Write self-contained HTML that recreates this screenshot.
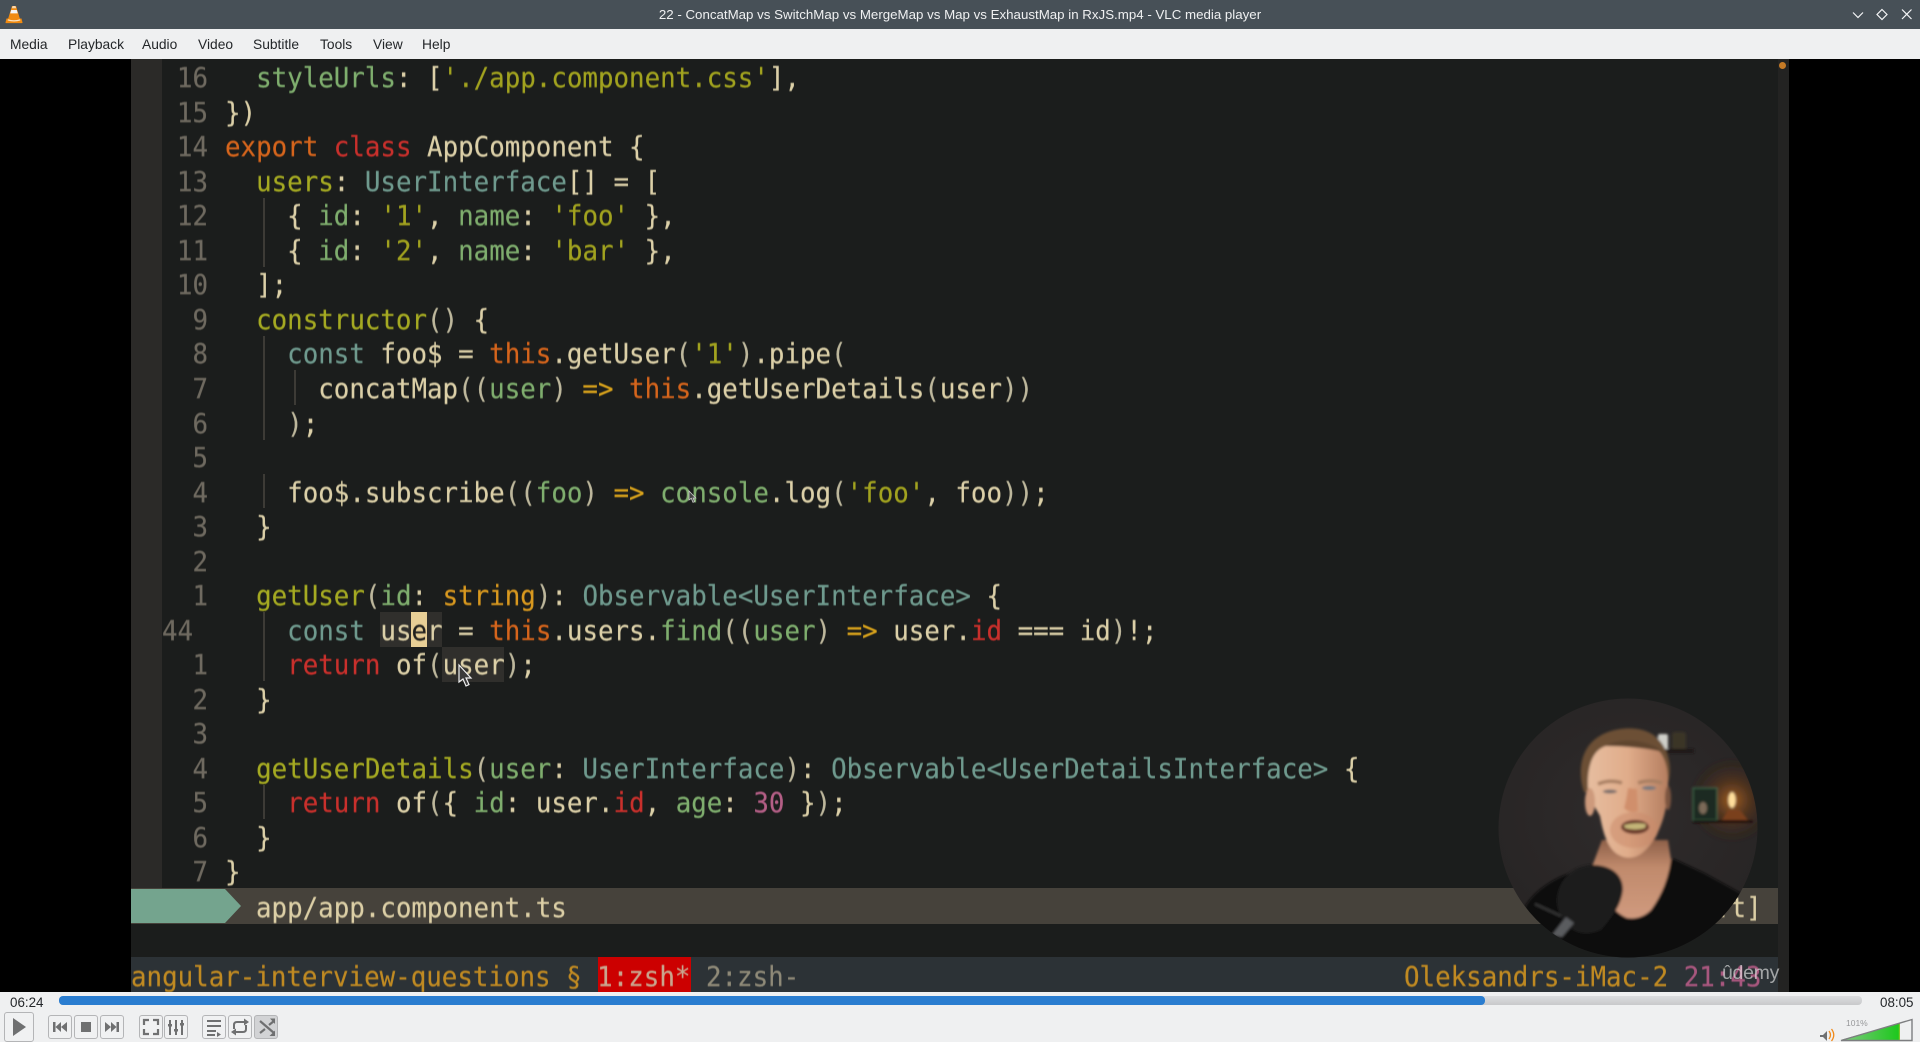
<!DOCTYPE html>
<html lang="en">
<head>
<meta charset="utf-8">
<title>VLC media player</title>
<style>
html,body{margin:0;padding:0;background:#000;}
body{position:relative;width:1920px;height:1042px;overflow:hidden;font-family:"Liberation Sans",sans-serif;}
.abs{position:absolute;}
#title{left:0;top:0;width:1920px;height:29px;background:#475057;}
#title span{position:absolute;left:0;width:1920px;text-align:center;top:6px;font-size:13.3px;line-height:17px;color:#eff0f1;}
#menu{left:0;top:29px;width:1920px;height:30px;background:#eff0f1;}
#menu span{position:absolute;top:7px;font-size:13.8px;line-height:18px;color:#232629;}
#video{left:131px;top:59px;width:1658px;height:933px;background:#1b1d1c;overflow:hidden;}
#gutter{left:131px;top:59px;width:31px;height:829px;background:#2b2a28;}
#rcol{left:1778px;top:59px;width:11px;height:933px;background:#232322;}
#dot{left:1779px;top:62px;width:7px;height:7px;border-radius:50%;background:#c47a26;}
.code{font-family:"DejaVu Sans Mono","Liberation Mono",monospace;font-size:28px;line-height:34.53px;white-space:pre;filter:blur(.4px);transform:scaleX(.9218);transform-origin:0 50%;-webkit-text-stroke:.2px currentColor;}
#code{left:224.5px;top:61.2px;height:829px;color:#dcd0a8;transform-origin:0 0;}
.num{color:#6f6a60;text-align:right;left:150px;width:58px;transform-origin:100% 0!important;}
#nums{top:61.2px;}
.g{color:#7fae6e}.o{color:#a2a31f}.y{color:#a5aa22}.t{color:#6f9a8e}.x{color:#d6651c}.r{color:#c9302c}.d{color:#d9991f}.p{color:#b45f86}.b{color:#d9a31c}.h{color:#bdb79c}
.hl{position:absolute;background:#302f2c;}
.guide{position:absolute;width:2px;background:#3d3b36;}
#status{left:131px;top:888px;width:1647px;height:36px;background:#46423b;}
#tmux{left:131px;top:957px;width:1647px;height:35px;background:#2c3236;}
#ctrl{left:0;top:992px;width:1920px;height:50px;background:#eff0f1;}
.btn{position:absolute;box-sizing:border-box;top:1015px;height:24px;width:24px;border:1px solid #b4b5b7;border-radius:3px;background:#f0f1f2;}
</style>
</head>
<body>
<div class="abs" id="title"><span>22 - ConcatMap vs SwitchMap vs MergeMap vs Map vs ExhaustMap in RxJS.mp4 - VLC media player</span></div>
<svg class="abs" style="left:0;top:0" width="30" height="29" viewBox="0 0 30 29">
  <polygon points="12,6 16,6 20,19 8,19" fill="#f08a10"/>
  <polygon points="11.2,10 16.8,10 17.8,13.4 10.2,13.4" fill="#f4f4f4"/>
  <polygon points="12.6,6 15.4,6 16.2,8.2 11.8,8.2" fill="#f8f8f8" opacity=".7"/>
  <path d="M6.5 18.5h15l1 4a.6.6 0 0 1-.6.6H6.1a.6.6 0 0 1-.6-.6z" fill="#f08a10"/>
  <path d="M8 19.2q6 2 12 0l.4 1.3q-6.4 2-12.8 0z" fill="#fbe3c0"/>
</svg>
<svg class="abs" style="left:1845px;top:3px" width="75" height="24" viewBox="0 0 75 24" fill="none" stroke="#f4f5f6" stroke-width="1.2">
  <path d="M8 9.5l5 5 5-5"/>
  <path d="M37 6.5l5 5-5 5-5-5z"/>
  <path d="M57 6.5l9.500 9.500M66.500 6.500l-9.500 9.500"/>
</svg>
<div class="abs" id="menu">
  <span style="left:10px">Media</span>
  <span style="left:68px">Playback</span>
  <span style="left:142px">Audio</span>
  <span style="left:198px">Video</span>
  <span style="left:253px">Subtitle</span>
  <span style="left:320px">Tools</span>
  <span style="left:373px">View</span>
  <span style="left:422px">Help</span>
</div>

<div class="abs" id="video"></div>
<div class="abs" id="gutter"></div>
<div class="abs" id="rcol"></div>
<div class="abs" id="dot"></div>

<!-- highlights -->
<div class="hl" style="left:380px;top:612px;width:62px;height:35px"></div>
<div class="hl" style="left:442px;top:647px;width:62px;height:35px"></div>
<div class="hl" style="left:411px;top:612px;width:15.5px;height:35px;background:#e8cf96"></div>

<!-- indent guides -->
<div class="guide" style="left:263px;top:198px;height:69px"></div>
<div class="guide" style="left:263px;top:336px;height:104px"></div>
<div class="guide" style="left:294px;top:370px;height:35px"></div>
<div class="guide" style="left:263px;top:474px;height:34px"></div>
<div class="guide" style="left:263px;top:612px;height:69px"></div>
<div class="guide" style="left:263px;top:785px;height:34px"></div>

<!-- line numbers -->
<div class="abs code num" id="nums">16
15
14
13
12
11
10
9
8
7
6
5
4
3
2
1

1
2
3
4
5
6
7</div>
<div class="abs code" style="left:162px;top:613.7px;color:#6f6a60">44</div>

<!-- code -->
<div class="abs code" id="code">  <span class="g">styleUrls</span>: [<span class="o">'./app.component.css'</span>],
})
<span class="x">export</span> <span class="r">class</span> AppComponent {
  <span class="y">users</span><span>:</span> <span class="t">UserInterface</span>[] = [
    { <span class="g">id</span>: <span class="o">'1'</span>, <span class="g">name</span>: <span class="o">'foo'</span> },
    { <span class="g">id</span>: <span class="o">'2'</span>, <span class="g">name</span>: <span class="o">'bar'</span> },
  ];
  <span class="y">constructor</span><span class="h">()</span> {
    <span class="t">const</span> foo$ = <span class="x">this</span>.getUser<span class="h">(</span><span class="o">'1'</span><span class="h">)</span>.pipe<span class="h">(</span>
      concatMap<span class="h">((</span><span class="g">user</span><span class="h">)</span> <span class="b">=&gt;</span> <span class="x">this</span>.getUserDetails<span class="h">(</span>user<span class="h">))</span>
    <span class="h">)</span>;

    foo$.subscribe<span class="h">((</span><span class="g">foo</span><span class="h">)</span> <span class="b">=&gt;</span> <span class="g">console</span>.log<span class="h">(</span><span class="o">'foo'</span>, foo<span class="h">))</span>;
  }

  <span class="y">getUser</span><span class="h">(</span><span class="g">id</span>: <span class="d">string</span><span class="h">)</span>: <span class="t">Observable&lt;UserInterface&gt;</span> {
    <span class="t">const</span> us<span style="color:#1f1f1c">e</span>r = <span class="x">this</span>.users.<span class="g">find</span><span class="h">((</span><span class="g">user</span><span class="h">)</span> <span class="b">=&gt;</span> user.<span class="r">id</span> === id<span class="h">)</span>!;
    <span class="r">return</span> of<span class="h">(</span>user<span class="h">)</span>;
  }

  <span class="y">getUserDetails</span><span class="h">(</span><span class="g">user</span>: <span class="t">UserInterface</span><span class="h">)</span>: <span class="t">Observable&lt;UserDetailsInterface&gt;</span> {
    <span class="r">return</span> of<span class="h">(</span>{ <span class="g">id</span>: user.<span class="r">id</span>, <span class="g">age</span>: <span class="p">30</span> }<span class="h">)</span>;
  }
}</div>

<!-- vim status line -->
<div class="abs" id="status"></div>
<svg class="abs" style="left:131px;top:888px" width="125" height="36" viewBox="0 0 125 36">
  <polygon points="0,1 94,1 110,18 94,35 0,35" fill="#74a48e"/>
</svg>
<div class="abs code" style="left:256px;top:891px;color:#dccfa6">app/app.component.ts</div>
<div class="abs code" style="left:1714.500px;top:891px;color:#dccfa6">:t]</div>

<!-- tmux -->
<div class="abs" id="tmux"></div>
<div class="abs" style="left:598px;top:957px;width:93px;height:35px;background:#cc0000"></div>
<div class="abs code" style="left:131px;top:960px;color:#c08a22">angular-interview-questions § <span style="color:#c9a58e">1:zsh*</span> <span style="color:#8f8a78">2:zsh-</span></div>
<div class="abs code" style="left:1404px;top:960px;color:#c08a22">Oleksandrs-iMac-2 <span style="color:#a8577e">21:43</span></div>
<div class="abs" style="left:1722px;top:961px;font-size:19.500px;line-height:24px;color:rgba(235,235,235,.62);letter-spacing:-.3px">ûdemy</div>

<!-- cursors -->
<svg class="abs" style="left:455px;top:662px" width="24" height="28" viewBox="0 0 24 28">
  <path d="M4 3v17l4-3 3 7 3-1.400-3-6.600h5z" fill="#3a3a3a" stroke="#eee" stroke-width="1.200"/>
</svg>
<svg class="abs" style="left:686px;top:489px" width="14" height="16" viewBox="0 0 14 16">
  <path d="M3 2v9l2.300-1.700 1.700 4 1.600-.8-1.600-3.500h2.700z" fill="#444" stroke="#ccc" stroke-width=".8"/>
</svg>

<!-- presenter webcam -->
<svg class="abs" style="left:1460px;top:680px" width="340" height="300" viewBox="0 0 340 300">
  <defs>
    <clipPath id="c"><circle cx="168" cy="148" r="129.500"/></clipPath>
    <radialGradient id="bg" cx=".5" cy=".45" r=".6"><stop offset="0" stop-color="#2f2b2b"/><stop offset=".7" stop-color="#282525"/><stop offset="1" stop-color="#1e1d1c"/></radialGradient>
    <radialGradient id="glow"><stop offset="0" stop-color="#b8691f" stop-opacity=".85"/><stop offset=".45" stop-color="#6e3d18" stop-opacity=".5"/><stop offset="1" stop-color="#3a2418" stop-opacity="0"/></radialGradient>
    <linearGradient id="skin" x1="0" x2="1" y1="0" y2="0"><stop offset="0" stop-color="#e6bd9f"/><stop offset=".5" stop-color="#e0ac8a"/><stop offset="1" stop-color="#b57e60"/></linearGradient>
    <linearGradient id="neck" x1="0" x2="0" y1="0" y2="1"><stop offset="0" stop-color="#8e6049"/><stop offset=".35" stop-color="#c08a6c"/><stop offset="1" stop-color="#d09a7e"/></linearGradient>
    <filter id="bl" x="-10%" y="-10%" width="120%" height="120%"><feGaussianBlur stdDeviation="1.200"/></filter>
    <filter id="bl2" x="-30%" y="-30%" width="160%" height="160%"><feGaussianBlur stdDeviation="3"/></filter>
  </defs>
  <g clip-path="url(#c)">
    <rect width="340" height="300" fill="url(#bg)"/>
    <g filter="url(#bl)">
      <circle cx="272" cy="120" r="44" fill="url(#glow)"/>
      <!-- shelf top -->
      <rect x="198" y="54" width="10" height="16" rx="2" fill="#cfcfc9"/>
      <rect x="212" y="52" width="14" height="18" rx="3" fill="#3a3528"/>
      <rect x="194" y="69" width="40" height="4" fill="#1c1412"/>
      <!-- lower shelf -->
      <rect x="233" y="108" width="24" height="32" fill="#1d2a24" stroke="#3e6a4c" stroke-width="1"/>
      <ellipse cx="243" cy="128" rx="4" ry="6" fill="#7b6a58"/>
      <path d="M262 140l6-10h12l8 10z" fill="#7a3f1c"/>
      <ellipse cx="272" cy="120" rx="3.800" ry="8" fill="#ffdf9c"/>
      <rect x="233" y="140" width="60" height="3" fill="#17110e"/>
      <!-- shirt -->
      <path d="M66 225q10-16 34-28l38-15 76-3 30 14 40 22 20 30v60H40z" fill="#0f0e0e"/>
      <!-- neck and chest -->
      <path d="M142 160l66 0 3 20q-4 28-20 50q-10 10-24 8q-14-6-22-22l-12-32z" fill="url(#neck)"/>
      <!-- hair back -->
      <path d="M124 112c-6-18-4-38 8-50c14-14 40-17 56-10c14 6 22 22 22 38c0 8-2 14-5 20l-70 2z" fill="#6c5036"/>
      <!-- head -->
      <path d="M128 108c-1-20 4-38 18-42c18-6 42-5 54 6c9 12 9 30 7 48c-2 18-10 42-26 54c-8 5-16 5-24 0c-10-7-14-22-17-38c-4-8-11-16-12-28z" fill="url(#skin)"/>
      <ellipse cx="130" cy="122" rx="5" ry="14" fill="#cd9a7c"/>
      <ellipse cx="208" cy="118" rx="3" ry="12" fill="#7c5540"/>
      <path d="M145 66c14-8 42-8 58 6c-16-4-40-6-58-6z" fill="#5e452f"/>
      <!-- cheeks and soft shading -->
      <ellipse cx="174" cy="150" rx="24" ry="18" fill="#c98a6a" opacity=".5"/>
      <!-- brows eyes nose mouth -->
      <path d="M138 104q12-5 24-1" stroke="#a97f62" stroke-width="3.500" fill="none"/>
      <path d="M178 103q12-4 24 0" stroke="#a97f62" stroke-width="3.500" fill="none"/>
      <ellipse cx="150" cy="111.500" rx="7" ry="2" fill="#7d6f6c"/>
      <ellipse cx="189" cy="108" rx="7" ry="2" fill="#76787e"/>
      <path d="M168 108q-2 14-4 20q6 6 14 3l-1-22z" fill="#d08f6c"/>
      <ellipse cx="175" cy="147" rx="14" ry="7" fill="#6b3a2b"/>
      <path d="M164 145q11-3 22-1l-1 4q-10 3-20 0z" fill="#c4b678"/>
      <!-- mic -->
      <path d="M97 218c2-20 18-34 38-33c20 1 31 14 27 30c-3 14-12 24-20 34c-10 6-25 6-32-2c-9-8-14-18-13-29z" fill="#1a1a1a"/>
      <path d="M92 255l14-18 8 6-12 14z" fill="#5a5b5f"/>
      <path d="M75 224l26 12" stroke="#3a3a3a" stroke-width="2" fill="none"/>
    </g>
  </g>
</svg>

<!-- controls -->
<div class="abs" id="ctrl"></div>
<div class="abs" style="left:10px;top:993.5px;font-size:13.400px;line-height:17px;color:#232629">06:24</div>
<div class="abs" style="left:1880px;top:993.5px;font-size:13.400px;line-height:17px;color:#232629">08:05</div>
<div class="abs" style="left:59px;top:996px;width:1803px;height:9px;border-radius:4px;background:linear-gradient(#dcdddf,#c8c9cb)"></div>
<div class="abs" style="left:59px;top:996px;width:1426px;height:9px;border-radius:4px;background:#2a7dd0"></div>

<div class="btn" style="left:4px;top:1012px;width:30px;height:30px"></div>
<div class="btn" style="left:48px"></div>
<div class="btn" style="left:74px"></div>
<div class="btn" style="left:100px"></div>
<div class="btn" style="left:139px"></div>
<div class="btn" style="left:164px"></div>
<div class="btn" style="left:202px"></div>
<div class="btn" style="left:228px"></div>
<div class="btn" style="left:254px;background:#d2d3d5"></div>

<svg class="abs" style="left:0;top:1005px" width="290" height="37" viewBox="0 0 290 37" fill="#6f7071">
  <polygon points="13,13 26,22 13,31"/>
  <!-- prev -->
  <rect x="53" y="17" width="2.500" height="10"/><polygon points="61,17 61,27 55.500,22"/><polygon points="67,17 67,27 61,22"/>
  <!-- stop -->
  <rect x="81" y="17" width="10" height="10"/>
  <!-- next -->
  <polygon points="105,17 105,27 111,22"/><polygon points="111,17 111,27 116.500,22"/><rect x="116.500" y="17" width="2.500" height="10"/>
  <!-- fullscreen -->
  <g fill="none" stroke="#6f7071" stroke-width="2.200">
    <path d="M144 20v-5h5M153 15h5v5M158 24v5h-5M149 29h-5v-5"/>
  </g>
  <!-- ext settings -->
  <g stroke="#6f7071" stroke-width="2" fill="#6f7071">
    <path d="M170 15v15M176 15v15M182 15v15" fill="none"/>
    <rect x="168" y="19" width="4" height="2.500" stroke="none"/><rect x="174" y="24" width="4" height="2.500" stroke="none"/><rect x="180" y="18" width="4" height="2.500" stroke="none"/>
  </g>
  <!-- playlist -->
  <g stroke="#6f7071" stroke-width="2" fill="none"><path d="M207 16h14M207 21h14M207 26h9"/></g>
  <polygon points="217,27 217,32 221,29.500"/><path d="M207 30h8" stroke="#6f7071" stroke-width="2" fill="none"/>
  <!-- loop -->
  <g fill="none" stroke="#6f7071" stroke-width="2"><path d="M234 24v-4q0-3 3-3h8"/><path d="M246 20v4q0 3-3 3h-8"/></g>
  <polygon points="244,13.500 249,17 244,20.500"/><polygon points="236,23.500 231,27 236,30.500"/>
  <!-- random -->
  <g fill="none" stroke="#6f7071" stroke-width="2.200"><path d="M260 16l14 12"/><path d="M260 28l5-4M269 20l5-4"/></g>
  <polygon points="270,13.500 275,13.500 275,19"/><polygon points="275,31 275,25.500 269.500,31"/>
</svg>

<!-- volume -->
<svg class="abs" style="left:1815px;top:1015px" width="105" height="27" viewBox="0 0 105 27">
  <defs><linearGradient id="vg" x1="0" x2="1"><stop offset="0" stop-color="#7fc97f"/><stop offset=".97" stop-color="#1ec81e"/><stop offset="1" stop-color="#a0c830"/></linearGradient></defs>
  <path d="M5 21h3l4-4v10l-4-4H5z" fill="#6f7071" transform="translate(0,-1)"/>
  <path d="M14 17q3 4 0 8M16.500 15q4.500 6 0 12" stroke="#f08a1c" stroke-width="1.300" fill="none" transform="translate(0,-1)"/>
  <polygon points="27,24.500 85,8 85,25.500 27,25.500" fill="url(#vg)"/>
  <polygon points="26,25.500 97,4.500 97,25.500" fill="none" stroke="#7d7e80" stroke-width="1.400"/>
  <text x="31" y="11" font-family="Liberation Sans, sans-serif" font-size="8.500" fill="#97989a">101%</text>
</svg>
</body>
</html>
